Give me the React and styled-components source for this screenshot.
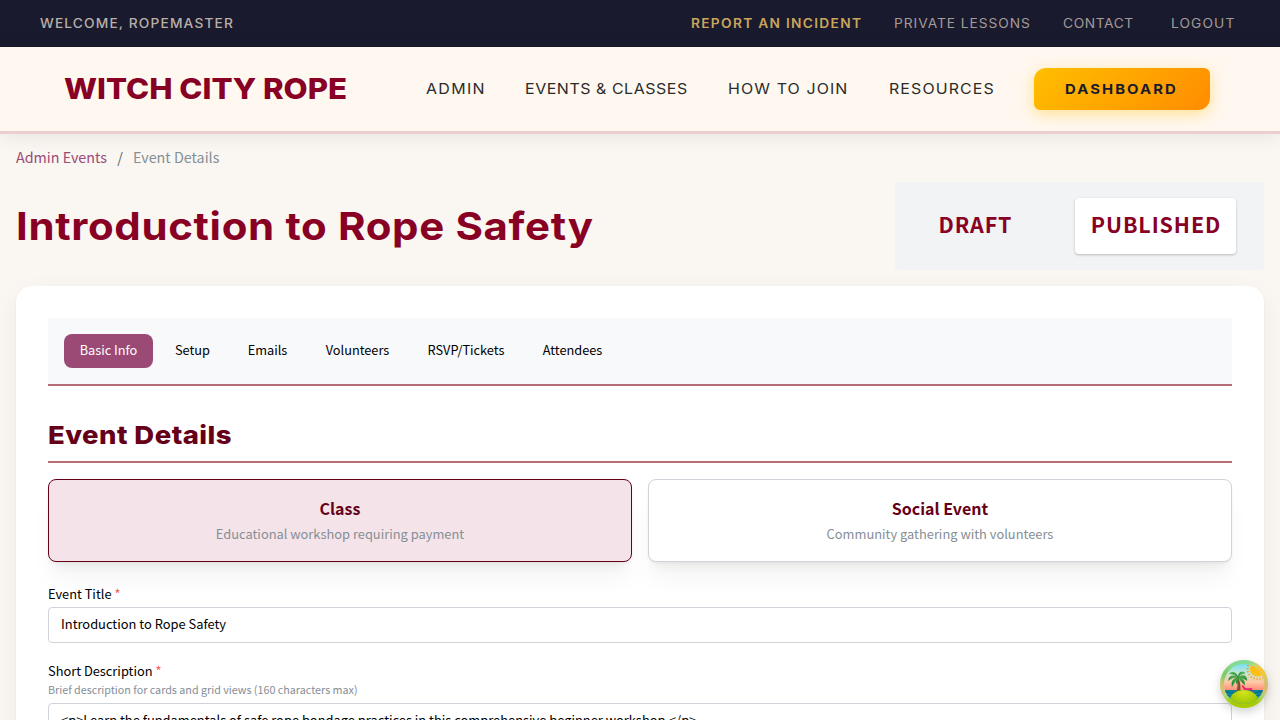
import React from "react";
import styled, { createGlobalStyle } from "styled-components";

const display = `Inter, "Liberation Sans", sans-serif`;
const body = `"Noto Sans CJK SC", "Liberation Sans", sans-serif`;
const c = {
  night: "#1a1a2e",
  ivory: "#fff8f0",
  cream: "#faf6f2",
  burgundy: "#880124",
  wine: "#660018",
  plum: "#9b4a75",
  rose: "#b76d75",
  gray: "#868e96",
  line: "#ced4da",
};

const GlobalStyle = createGlobalStyle`
  * { box-sizing: border-box; }
  body { margin: 0; background: ${c.cream}; font-family: ${body}; overflow: hidden; }
`;

const Page = styled.div`
  height: 720px;
  overflow: hidden;
  background: ${c.cream};
`;

/* Widened display lettering: the slot keeps the drawn width in the flow. */
const Slot = styled.span`
  display: block;
  flex: none;
  width: ${(p) => p.$w}px;
  font-family: ${display};
  white-space: nowrap;
`;
const Letters = styled.span`
  display: inline-block;
  letter-spacing: ${(p) => p.$ls || 0}px;
  transform: scaleX(${(p) => p.$k || 1.1});
  transform-origin: left center;
`;
const Wide = ({ w, ls, k, children }) => (
  <Slot $w={w}>
    <Letters $ls={ls} $k={k}>{children}</Letters>
  </Slot>
);

const TopBar = styled.div`
  height: 47px;
  padding: 0 44px 0 40px;
  display: flex;
  align-items: center;
  justify-content: space-between;
  background: ${c.night};
  color: #b8b0a8;
  font-size: 12.5px;
  line-height: 21px;
  font-weight: 450;
`;
const TopLinks = styled.div`
  display: flex;
  gap: 32px;
`;
const TopLink = styled.a`
  color: ${(p) => (p.$accent ? "#c9a55c" : "#a39c98")};
  font-weight: ${(p) => (p.$accent ? 600 : 400)};
  padding-left: ${(p) => p.$pad || 0}px;
`;

const Header = styled.header`
  position: relative;
  height: 87px;
  padding: 0 70px 0 64px;
  display: flex;
  align-items: center;
  justify-content: space-between;
  background: ${c.ivory};
  border-bottom: 3px solid #ebcecd;
  box-shadow: 0 2px 20px rgba(0, 0, 0, 0.08);
`;
const Brand = styled.div`
  color: ${c.burgundy};
  font-size: 29px;
  line-height: 40px;
  font-weight: 800;
`;
const Nav = styled.nav`
  display: flex;
  align-items: center;
  gap: 40px;
`;
const NavLink = styled.a`
  color: #2b2b2b;
  font-size: 14.5px;
  line-height: 24px;
  font-weight: 400;
`;
const CtaButton = styled.button`
  width: 176px;
  height: 42px;
  padding: 0 0 0 31px;
  border: 0;
  border-radius: 12px 6px 12px 6px;
  background: linear-gradient(135deg, #ffbf00, #ff8c00);
  box-shadow: 0 4px 15px rgba(255, 191, 0, 0.4);
  color: ${c.night};
  font-size: 13.5px;
  font-weight: 700;
  text-align: left;
`;

const Content = styled.main`
  padding: 0 16px;
`;
const Breadcrumbs = styled.div`
  display: flex;
  height: 48px;
  padding-top: 11px;
  font-size: 14.32px;
  line-height: 24px;
  color: ${c.gray};
  white-space: pre;
`;
const Crumb = styled.a`
  color: ${c.plum};
`;
const Slash = styled.span`
  width: 26px;
  text-align: center;
  color: #5c636a;
`;

const TitleRow = styled.div`
  height: 88px;
  display: flex;
  align-items: center;
  justify-content: space-between;
`;
const Title = styled.h1`
  margin: 0;
  color: ${c.burgundy};
  font-size: 38.5px;
  line-height: 52px;
  font-weight: 700;
`;
const Toggle = styled.div`
  width: 369px;
  height: 88px;
  padding: 16px 28px 16px 16px;
  display: flex;
  justify-content: space-between;
  border-radius: 4px;
  background: #f1f3f5;
`;
const ToggleOption = styled.button`
  width: ${(p) => (p.$on ? 161 : 128)}px;
  height: 56px;
  padding: 0 0 5px 1px;
  border: 0;
  border-radius: 4px;
  background: ${(p) => (p.$on ? "#fff" : "transparent")};
  box-shadow: ${(p) => (p.$on ? "0 1px 3px rgba(0,0,0,.15), 0 1px 2px rgba(0,0,0,.1)" : "none")};
  color: ${c.burgundy};
  font-family: ${body};
  font-size: 21.4px;
  font-weight: 600;
  letter-spacing: 0.9px;
`;

const Card = styled.section`
  margin-top: 16px;
  height: 600px;
  padding: 32px;
  border-radius: 16px;
  background: #fff;
  box-shadow: 0 1px 3px rgba(0, 0, 0, 0.05), 0 10px 30px rgba(0, 0, 0, 0.05);
`;
const Tabs = styled.div`
  height: 68px;
  padding: 16px;
  display: flex;
  gap: 6px;
  background: #f8f9fb;
  border-bottom: 2px solid ${c.rose};
`;
const Tab = styled.button`
  width: ${(p) => p.$w}px;
  height: 34px;
  padding: 0 0 3px;
  border: 0;
  border-radius: 8px;
  background: ${(p) => (p.$on ? c.plum : "transparent")};
  color: ${(p) => (p.$on ? "#fff" : "#000")};
  font-family: ${body};
  font-size: 12.75px;
  white-space: nowrap;
`;
const SectionTitle = styled.h2`
  height: 77px;
  margin: 0 0 16px;
  padding-top: 33px;
  border-bottom: 2px solid ${c.rose};
  color: ${c.wine};
  font-size: 25px;
  line-height: 32px;
  font-weight: 800;
`;
const Choices = styled.div`
  display: grid;
  grid-template-columns: 1fr 1fr;
  gap: 16px;
`;
const Choice = styled.div`
  height: 83px;
  padding-top: 16px;
  border: 1px solid ${(p) => (p.$on ? c.wine : c.line)};
  border-radius: 8px;
  background: ${(p) => (p.$on ? "#f4e4e9" : "#fff")};
  box-shadow: 0 1px 3px rgba(0, 0, 0, 0.05), 0 20px 25px -5px rgba(0, 0, 0, 0.05),
    0 10px 10px -5px rgba(0, 0, 0, 0.04);
  text-align: center;
`;
const ChoiceName = styled.div`
  color: ${c.wine};
  font-size: 16px;
  line-height: 24px;
  font-weight: 600;
`;
const ChoiceNote = styled.div`
  margin-top: 4px;
  color: ${c.gray};
  font-size: 12.87px;
  line-height: 20px;
`;
const Field = styled.div`
  margin-top: ${(p) => p.$gap}px;
`;
const Label = styled.label`
  display: block;
  font-size: 12.83px;
  line-height: 21px;
  color: #000;
`;
const Required = styled.span`
  color: #fa5252;
`;
const Hint = styled.div`
  margin: 2px 0 6px;
  color: ${c.gray};
  font-size: 10.76px;
  line-height: 14px;
`;
const Input = styled.div`
  height: 36px;
  margin-top: 3px;
  padding: 0 12px;
  border: 1px solid ${c.line};
  border-radius: 4px;
  background: #fff;
  color: #000;
  font-size: 12.89px;
  line-height: 32px;
  white-space: nowrap;
`;

const Fab = styled.button`
  position: fixed;
  right: 12px;
  bottom: 12px;
  width: 48px;
  height: 48px;
  padding: 0;
  border: 0;
  border-radius: 50%;
  background: none;
  box-shadow: 0 4px 10px rgba(0, 0, 0, 0.18);
  svg { display: block; }
`;

const Island = () => (
  <svg width="48" height="48" viewBox="0 0 48 48">
    <defs>
      <clipPath id="disc"><circle cx="24" cy="24" r="24" /></clipPath>
      <clipPath id="lens"><circle cx="24" cy="24" r="20" /></clipPath>
      <linearGradient id="sky" x1="0" y1="0" x2="0" y2="1">
        <stop offset="0.05" stopColor="#6bdfff" />
        <stop offset="0.28" stopColor="#c5e6cf" />
        <stop offset="0.46" stopColor="#ffc9a3" />
        <stop offset="0.68" stopColor="#ff7b6e" />
      </linearGradient>
      <linearGradient id="sea" x1="0" y1="0" x2="0" y2="1">
        <stop offset="0" stopColor="#087f9b" />
        <stop offset="1" stopColor="#15bdc9" />
      </linearGradient>
      <radialGradient id="hill" cx="0.5" cy="0.1" r="0.8">
        <stop offset="0" stopColor="#d4e519" />
        <stop offset="1" stopColor="#88b900" />
      </radialGradient>
      <linearGradient id="leaf" x1="0" y1="0" x2="0" y2="1">
        <stop offset="0" stopColor="#5dbb42" />
        <stop offset="1" stopColor="#087c35" />
      </linearGradient>
      <filter id="soft" x="-30%" y="-30%" width="160%" height="160%">
        <feGaussianBlur stdDeviation="3.5" />
      </filter>
    </defs>
    <g clipPath="url(#disc)">
      <rect width="48" height="48" fill="#a8dc86" />
      <g filter="url(#soft)">
        <ellipse cx="20" cy="2" rx="18" ry="6" fill="#7ddc98" />
        <ellipse cx="43" cy="9" rx="9" ry="9" fill="#ffc42e" />
        <ellipse cx="2" cy="27" rx="6" ry="6" fill="#efb66a" />
        <ellipse cx="47" cy="27" rx="5" ry="8" fill="#f5a765" />
        <ellipse cx="6" cy="15" rx="6" ry="7" fill="#68c75d" />
        <ellipse cx="24" cy="46" rx="25" ry="10" fill="#a8ca00" />
      </g>
    </g>
    <g clipPath="url(#lens)">
      <rect width="48" height="48" fill="url(#sky)" />
      <circle cx="37.5" cy="9" r="7.6" fill="#ffbd16" />
      <circle cx="37.5" cy="9" r="10" fill="none" stroke="#ff991b" strokeWidth="2" strokeDasharray="1.1 2" />
      <rect y="30" width="48" height="14" fill="url(#sea)" />
      <path d="M2 32.5q3-1.5 6 0t6 0 6 0 6 0 6 0 6 0 6 0M2 35.5q3-1.5 6 0t6 0 6 0 6 0 6 0 6 0 6 0" fill="none" stroke="#075f7c" strokeWidth="0.9" />
      <path d="M18 17q3.6 6.500 2 15h-3.600q2-7.500.4-14z" fill="#86502d" />
      <g fill="url(#leaf)" stroke="#23883a" strokeWidth="0.4">
        <path d="M18 17Q15 10 9.500 13.500Q14 13.500 18 17z" />
        <path d="M18 17Q9 13.500 8.500 20.500Q12.500 16.500 18 17z" />
        <path d="M18 17Q10.500 18.500 12 26.500Q15.500 20.500 18 17z" />
        <path d="M18 17Q19 9.500 25 13Q20.500 13.500 18 17z" />
        <path d="M18 17Q26.500 12.500 27 20.500Q23 17.500 18 17z" />
        <path d="M18 17Q25.500 18.500 24.500 25Q20.500 21.500 18 17z" />
        <path d="M18 17Q15 19 16.500 24Q19.500 20.500 18 17z" />
      </g>
      <path d="M22.500 26l2.500 3h6.500M25 29l-1 2M31 29l.8 2" fill="none" stroke="#e21868" strokeWidth="1.600" strokeLinecap="round" />
      <ellipse cx="24" cy="40.500" rx="14" ry="10.500" fill="url(#hill)" />
    </g>
  </svg>
);

const tabs = [
  ["Basic Info", 89],
  ["Setup", 67],
  ["Emails", 71],
  ["Volunteers", 97],
  ["RSVP/Tickets", 108],
  ["Attendees", 93],
];

export default function App() {
  return (
    <Page>
      <GlobalStyle />
      <TopBar>
        <Wide w={194} ls={1.03}>WELCOME, ROPEMASTER</Wide>
        <TopLinks>
          <TopLink $accent><Wide w={171} ls={1.17}>REPORT AN INCIDENT</Wide></TopLink>
          <TopLink><Wide w={137} ls={0.86}>PRIVATE LESSONS</Wide></TopLink>
          <TopLink><Wide w={71} ls={0.55}>CONTACT</Wide></TopLink>
          <TopLink $pad={5}><Wide w={65} ls={1}>LOGOUT</Wide></TopLink>
        </TopLinks>
      </TopBar>
      <Header>
        <Brand><Wide w={284} k={1.075}>WITCH CITY ROPE</Wide></Brand>
        <Nav>
          <NavLink><Wide w={59} ls={1.2}>ADMIN</Wide></NavLink>
          <NavLink><Wide w={163} ls={0.5}>EVENTS &amp; CLASSES</Wide></NavLink>
          <NavLink><Wide w={121} ls={1}>HOW TO JOIN</Wide></NavLink>
          <NavLink><Wide w={105} ls={1}>RESOURCES</Wide></NavLink>
          <CtaButton><Wide w={113} ls={1.9}>DASHBOARD</Wide></CtaButton>
        </Nav>
      </Header>
      <Content>
        <Breadcrumbs>
          <Crumb>Admin Events</Crumb>
          <Slash>/</Slash>
          <span>Event Details</span>
        </Breadcrumbs>
        <TitleRow>
          <Title><Wide w={580} ls={0.6} k={1.09}>Introduction to Rope Safety</Wide></Title>
          <Toggle>
            <ToggleOption>DRAFT</ToggleOption>
            <ToggleOption $on>PUBLISHED</ToggleOption>
          </Toggle>
        </TitleRow>
        <Card>
          <Tabs>
            {tabs.map(([name, w], i) => (
              <Tab key={name} $w={w} $on={i === 0}>{name}</Tab>
            ))}
          </Tabs>
          <SectionTitle><Wide w={186} ls={0.4}>Event Details</Wide></SectionTitle>
          <Choices>
            <Choice $on>
              <ChoiceName>Class</ChoiceName>
              <ChoiceNote>Educational workshop requiring payment</ChoiceNote>
            </Choice>
            <Choice>
              <ChoiceName>Social Event</ChoiceName>
              <ChoiceNote>Community gathering with volunteers</ChoiceNote>
            </Choice>
          </Choices>
          <Field $gap={21}>
            <Label>Event Title <Required>*</Required></Label>
            <Input>Introduction to Rope Safety</Input>
          </Field>
          <Field $gap={17}>
            <Label>Short Description <Required>*</Required></Label>
            <Hint>Brief description for cards and grid views (160 characters max)</Hint>
            <Input>&lt;p&gt;Learn the fundamentals of safe rope bondage practices in this comprehensive beginner workshop.&lt;/p&gt;</Input>
          </Field>
        </Card>
      </Content>
      <Fab aria-label="Open developer tools"><Island /></Fab>
    </Page>
  );
}
